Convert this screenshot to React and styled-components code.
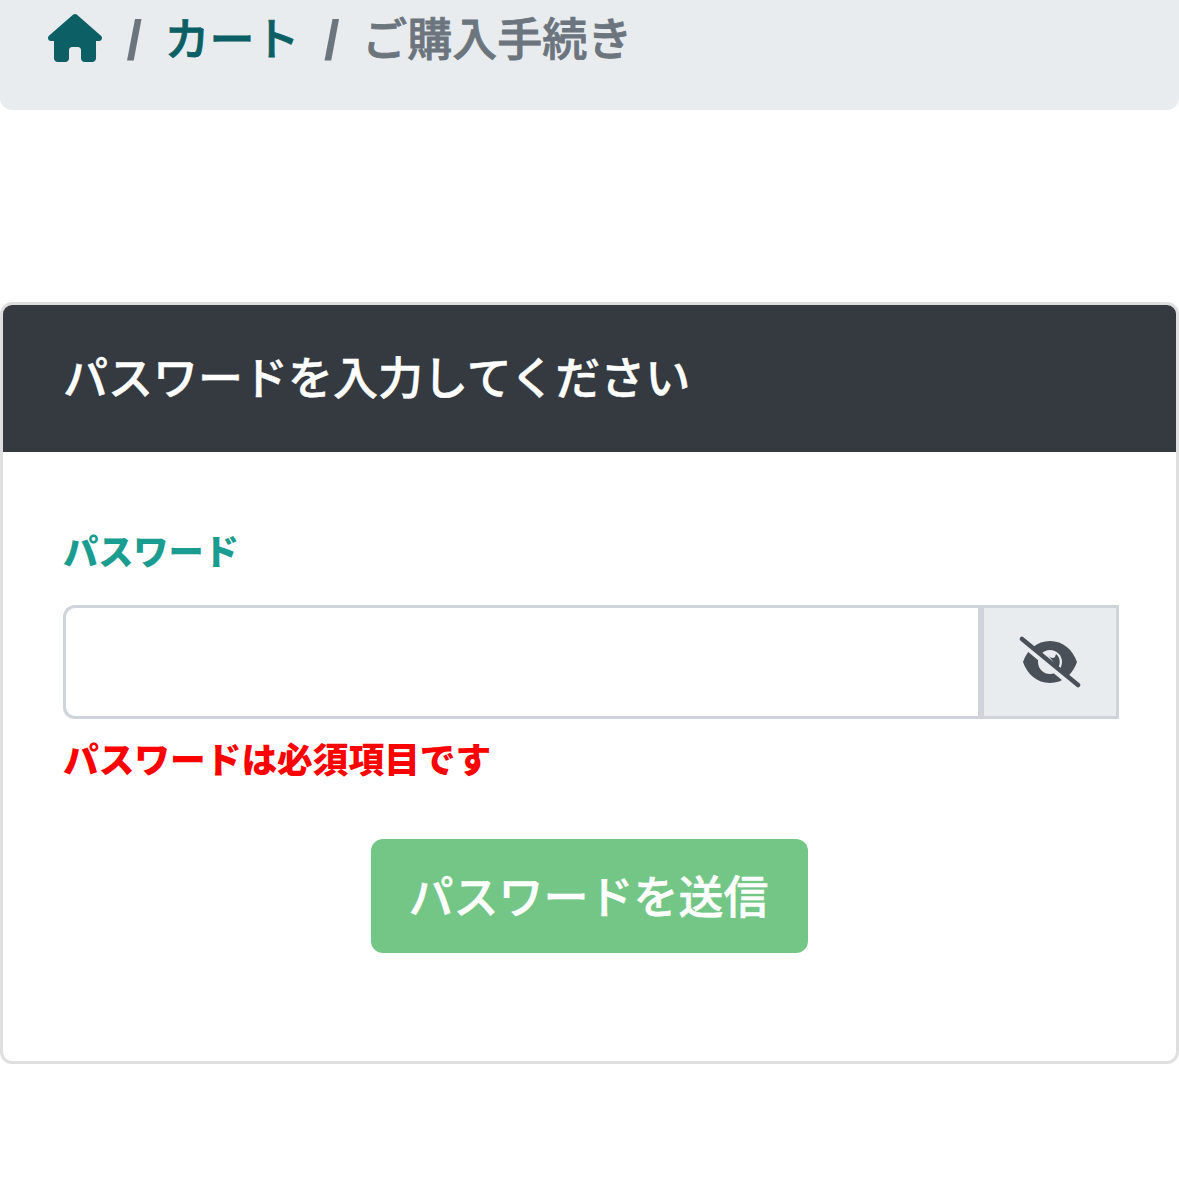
import React from 'react';
import styled, { createGlobalStyle } from 'styled-components';
import { FaHouse } from 'react-icons/fa6';

const Global = createGlobalStyle`
    html, body { margin: 0; padding: 0; background: #fff; }
    body { font-family: "Noto Sans CJK JP", "Liberation Sans", sans-serif; }
    * { box-sizing: border-box; }
`

const Page = styled.div`
    width: 1179px;
    height: 1179px;
    overflow: hidden;
`

const Breadcrumb = styled.nav`
    display: flex;
    align-items: flex-start;
    height: 110px;
    margin-bottom: 192px;
    padding: 7px 0 0 48px;
    background: #e9ecef;
    border-radius: 0 0 12px 12px;
    font-size: 45px;
    font-weight: 500;
    -webkit-text-stroke: 0.8px;
    line-height: 60px;
`

const Crumb = styled.span`
    color: ${props => props.$active ? '#6c757d' : '#0c5f64'};
`

const HomeIcon = styled(FaHouse)`
    width: 54px;
    height: 48px;
    margin-top: 7px;
    color: #0c5f64;
`

const Slash = styled.span`
    color: #6c757d;
    font-family: "Liberation Sans", sans-serif;
    font-weight: 700;
    font-size: 56px;
    line-height: 66px;
    padding: 0 22.5px 0 24.5px;
    -webkit-text-stroke: 0;
`

const Card = styled.section`
    height: 762px;
    border: 3px solid #dfdfdf;
    border-radius: 12px;
    overflow: hidden;
`

const CardHeader = styled.h2`
    margin: 0;
    height: 147px;
    padding: 38px 0 0 60px;
    background: #343a40;
    color: #fff;
    font-size: 45px;
    font-weight: 500;
    -webkit-text-stroke: 0.5px;
    line-height: 66px;
`

const CardBody = styled.div`
    padding: 72px 57px 0 60px;
`

const Label = styled.label`
    display: block;
    color: #1b9c90;
    font-size: 35.2px;
    font-weight: 900;
    line-height: 52px;
    margin-bottom: 29px;
`

const InputGroup = styled.div`
    display: flex;
    height: 114px;
`

const Input = styled.input`
    flex: 1;
    min-width: 0;
    border: 3px solid #ced4da;
    border-right: 0;
    border-radius: 12px 0 0 12px;
    background: #fff;
    outline: none;
`

const EyeButton = styled.button`
    width: 141px;
    padding: 0;
    display: flex;
    align-items: center;
    justify-content: center;
    border: 3px solid #ced4da;
    border-left-width: 6px;
    background: #e9ecef;
`

const ErrorText = styled.p`
    margin: 13px 0 0;
    color: #ff0000;
    font-size: 35.7px;
    font-weight: 900;
    line-height: 52px;
`

const Actions = styled.div`
    display: flex;
    justify-content: center;
    margin-top: 55px;
    padding-right: 3px;
`

const Submit = styled.button`
    width: 437px;
    height: 114px;
    padding: 0 2px 4px 0;
    border: 0;
    border-radius: 12px;
    background: #74c687;
    color: #fff;
    font-family: inherit;
    font-size: 45px;
    font-weight: 500;
    -webkit-text-stroke: 0.5px;
`

const EyeSlash = () => (
    <svg width="62" height="52" viewBox="0 0 62 52">
        <path
            fill="#495057"
            fillRule="evenodd"
            d="M31 5C44 5 54 14 58 26C54 38 44 47 31 47C18 47 8 38 4 26C8 14 18 5 31 5ZM31 14A12 12 0 1 0 31 38A12 12 0 1 0 31 14Z"
        />
        <path fill="#495057" d="M29 19C31 22 34 23 36 21L37 18C41 21 42 27 39 32Z" />
        <path stroke="#e9ecef" strokeWidth="5" d="M0 5L54 50" />
        <path stroke="#495057" strokeWidth="4.5" strokeLinecap="round" d="M3 3L59 49" />
    </svg>
)

export default function App() {
    return (
        <Page>
            <Global />
            <Breadcrumb>
                <HomeIcon />
                <Slash>/</Slash>
                <Crumb>カート</Crumb>
                <Slash>/</Slash>
                <Crumb $active>ご購入手続き</Crumb>
            </Breadcrumb>
            <Card>
                <CardHeader>パスワードを入力してください</CardHeader>
                <CardBody>
                    <Label>パスワード</Label>
                    <InputGroup>
                        <Input type="password" />
                        <EyeButton type="button"><EyeSlash /></EyeButton>
                    </InputGroup>
                    <ErrorText>パスワードは必須項目です</ErrorText>
                    <Actions>
                        <Submit type="button">パスワードを送信</Submit>
                    </Actions>
                </CardBody>
            </Card>
        </Page>
    )
}
